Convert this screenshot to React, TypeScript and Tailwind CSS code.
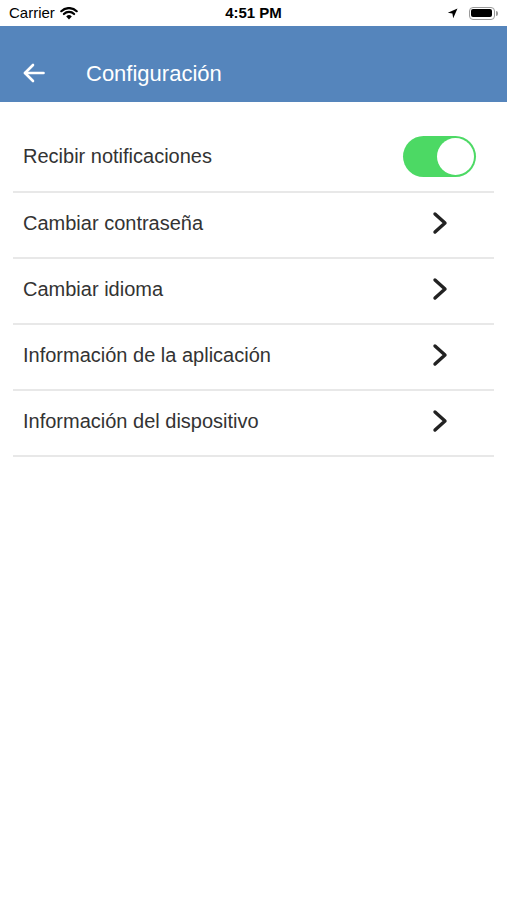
const rows = ["Cambiar contraseña", "Cambiar idioma", "Información de la aplicación", "Información del dispositivo"];

function StatusBar() {
  return (
    <div className="flex h-[26px] items-center justify-between bg-white px-[9px] text-[15px] text-black">
      <div className="flex w-[120px] items-center gap-[5px]">
        <span>Carrier</span>
        <svg width="18" height="13" viewBox="0 0 18 13">
          <path d="M9 12.5 L6.2 9.4 A4 4 0 0 1 11.8 9.4 Z" fill="#000" />
          <path d="M3.9 7 A7.3 7.3 0 0 1 14.1 7" stroke="#000" strokeWidth="2.2" fill="none" strokeLinecap="round" />
          <path d="M1.3 4.2 A11 11 0 0 1 16.7 4.2" stroke="#000" strokeWidth="2.2" fill="none" strokeLinecap="round" />
        </svg>
      </div>
      <span className="font-semibold">4:51 PM</span>
      <div className="flex w-[120px] items-center justify-end gap-[11px]">
        <svg width="11" height="11" viewBox="0 0 11 11">
          <path d="M10.5 0.5 L0.8 4.8 L5.4 5.6 L6.2 10.2 Z" fill="#000" />
        </svg>
        <div className="flex items-center">
          <div className="h-[13px] w-[26px] rounded-[4px] border border-[#9a9a9a] p-[1.5px]">
            <div className="h-full w-full rounded-[2px] bg-black" />
          </div>
          <div className="ml-[1px] h-[5px] w-[2px] rounded-r-sm bg-[#9a9a9a]" />
        </div>
      </div>
    </div>
  );
}

function Chevron() {
  return (
    <svg width="16" height="24" viewBox="0 0 16 24" fill="none" stroke="#222" strokeWidth="3.4" strokeLinecap="round" strokeLinejoin="round">
      <path d="M3 3 L13 12 L3 21" />
    </svg>
  );
}

export default function App() {
  return (
    <div className="min-h-[900px] bg-white" style={{ fontFamily: "'Liberation Sans', Arial, sans-serif" }}>
      <StatusBar />
      <header className="flex h-[76px] items-center bg-[#5585bc] pl-[23px] pt-[18px] text-white">
        <svg width="22" height="20" viewBox="0 0 22 20" fill="none" stroke="#fff" strokeWidth="2.6" strokeLinecap="round" strokeLinejoin="round">
          <path d="M20.5 10 H2" />
          <path d="M10 2 L2 10 L10 18" />
        </svg>
        <h1 className="ml-[41px] text-[22px]">Configuración</h1>
      </header>
      <div className="px-[13px] pt-[25px]">
        <div className="flex h-[66px] items-center justify-between border-b-2 border-[#e8e8e8] pl-[10px] pr-[18px] pb-[6px]">
          <span className="text-[20px] text-[#333]">Recibir notificaciones</span>
          <div className="flex h-[41px] w-[73px] items-center justify-end rounded-full bg-[#4cd964] p-[2px]">
            <div className="h-[37px] w-[37px] rounded-full bg-white" />
          </div>
        </div>
        {rows.map((label) => (
          <div key={label} className="flex h-[66px] items-center justify-between border-b-2 border-[#e8e8e8] pb-[4px] pl-[10px] pr-[46px]">
            <span className="text-[20px] text-[#333]">{label}</span>
            <Chevron />
          </div>
        ))}
      </div>
    </div>
  );
}
